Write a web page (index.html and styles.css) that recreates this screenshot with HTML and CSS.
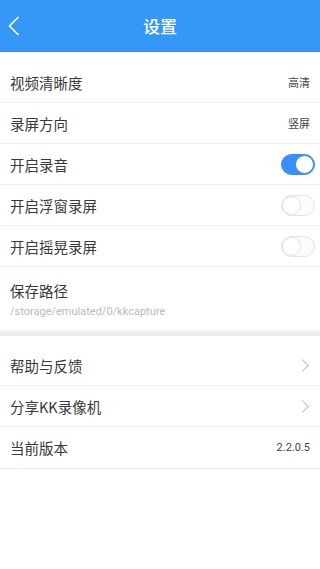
FILE: index.html
```html
<!DOCTYPE html>
<html lang="zh-CN">
<head>
    <meta charset="UTF-8">
    <meta name="viewport" content="width=device-width, initial-scale=1.0">
    <title>设置</title>
    <link rel="stylesheet" href="styles.css">
</head>
<body>
    <div class="header">
        <a class="back" href="#">
            <svg width="12" height="20" viewBox="0 0 12 20"><path d="M10.5 1 L1.5 10 L10.5 19" fill="none" stroke="#fff" stroke-width="1.6"/></svg>
        </a>
        <h1>设置</h1>
    </div>

    <div class="group first">
        <div class="row">
            <span class="label">视频清晰度</span>
            <span class="value">高清</span>
        </div>
        <div class="row">
            <span class="label">录屏方向</span>
            <span class="value">竖屏</span>
        </div>
        <div class="row">
            <span class="label">开启录音</span>
            <span class="switch on"></span>
        </div>
        <div class="row">
            <span class="label">开启浮窗录屏</span>
            <span class="switch"></span>
        </div>
        <div class="row">
            <span class="label">开启摇晃录屏</span>
            <span class="switch"></span>
        </div>
        <div class="row path-row">
            <span class="label">保存路径</span>
            <span class="path">/storage/emulated/0/kkcapture</span>
        </div>
    </div>

    <div class="group">
        <div class="row">
            <span class="label">帮助与反馈</span>
            <span class="arrow"></span>
        </div>
        <div class="row">
            <span class="label">分享KK录像机</span>
            <span class="arrow"></span>
        </div>
        <div class="row">
            <span class="label">当前版本</span>
            <span class="value">2.2.0.5</span>
        </div>
    </div>
</body>
</html>
```

FILE: styles.css
```css
body {
    font-family: "Noto Sans CJK SC", Roboto, sans-serif;
    background: #fff;
    margin: 0;
    color: #333;
}
.header {
    height: 51px;
    background: #3598f8;
    border-bottom: 1px solid #2f8cf0;
    display: flex;
    align-items: center;
    justify-content: center;
    position: relative;
}
.header h1 {
    margin: 0;
    color: #fff;
    font-size: 17px;
    font-weight: 500;
}
.back {
    position: absolute;
    left: 8px;
    top: 16px;
    display: flex;
}
.group.first {
    margin-top: 10px;
    border-bottom: 5px solid #eeeeee;
}
.group {
    margin-top: 9px;
}
.row {
    height: 40px;
    border-bottom: 1px solid #eeeeee;
    display: flex;
    align-items: center;
    justify-content: space-between;
    padding: 0 10px;
}
.group .row:last-child {
    height: 41px;
}
.group.first .row:last-child {
    border-bottom: none;
    height: 64px;
}
.label {
    font-size: 14.5px;
    color: #383838;
}
.value {
    font-size: 11px;
    color: #444;
    font-family: Roboto, "Noto Sans CJK SC", sans-serif;
}
.path-row {
    flex-direction: column;
    align-items: flex-start;
    justify-content: center;
    gap: 4px;
}
.path {
    font-size: 11px;
    color: #bbb;
    font-family: Roboto, sans-serif;
}
.switch {
    width: 32px;
    height: 19px;
    border: 1px solid #e3e3e3;
    border-radius: 11px;
    background: #fbfbfb;
    position: relative;
    margin-right: -5px;
}
.switch::after {
    content: "";
    position: absolute;
    left: 0;
    top: 0;
    width: 17px;
    height: 17px;
    border: 1px solid #e3e3e3;
    border-radius: 50%;
    background: #fff;
}
.switch.on {
    background: #3a8ef6;
    border-color: #3a8ef6;
}
.switch.on::after {
    left: auto;
    right: 0;
    border-color: #3a8ef6;
}
.arrow {
    width: 8px;
    height: 8px;
    border-top: 1.6px solid #bbb;
    border-right: 1.6px solid #bbb;
    transform: rotate(45deg);
    margin-right: 3px;
}
```
